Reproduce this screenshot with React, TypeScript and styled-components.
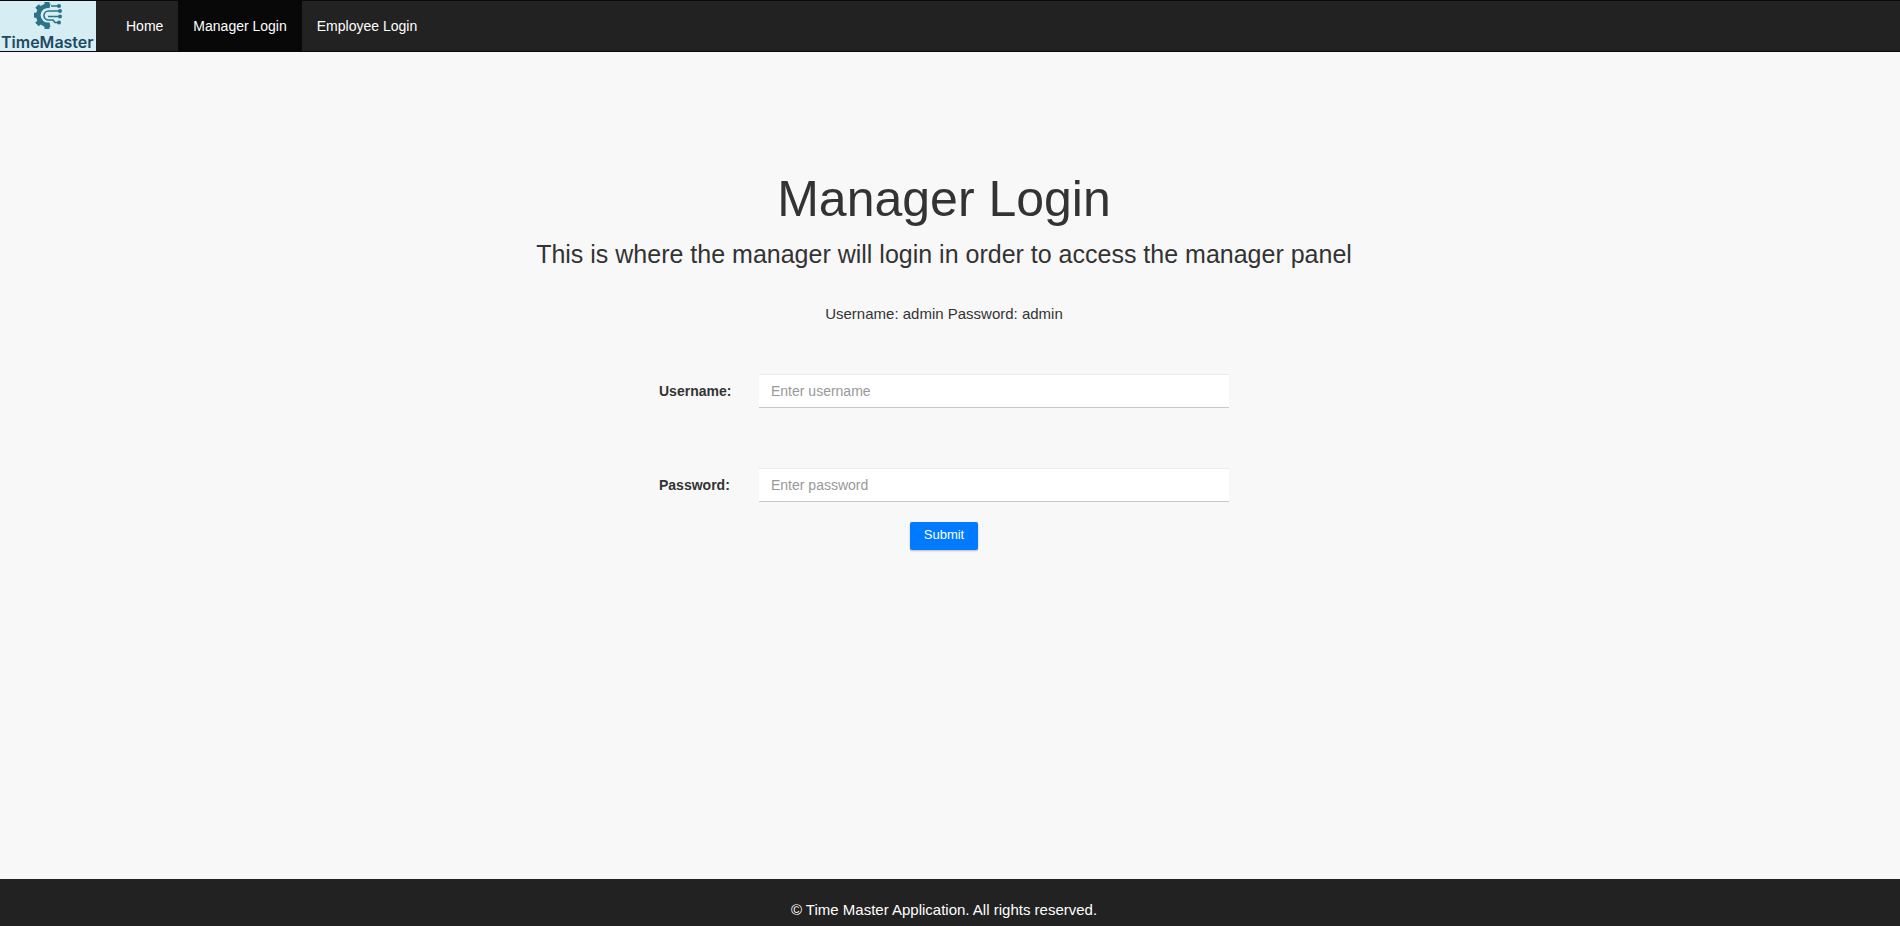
import React from "react";
import styled, { createGlobalStyle } from "styled-components";

const GlobalStyle = createGlobalStyle`
  *, *::before, *::after { box-sizing: border-box; }
  body {
    margin: 0;
    background: #f8f8f8;
    color: #333;
    font-family: "Liberation Sans", Arial, sans-serif;
    font-size: 14px;
    line-height: 20px;
  }
`;

const Page = styled.div`
  display: flex;
  flex-direction: column;
  min-height: 100vh;
`;

const Navbar = styled.nav`
  display: flex;
  background: #222;
  border: solid #080808;
  border-width: 1px 0;
`;

const Brand = styled.a`
  display: block;
  width: 96px;
  height: 50px;
  margin-right: 15px;
  background: #d7edf4;

  svg { display: block; }
`;

const NavList = styled.ul`
  display: flex;
  margin: 0;
  padding: 0;
  list-style: none;
`;

const NavLink = styled.a<{ $active?: boolean }>`
  display: block;
  padding: 15px;
  color: #fff;
  background: ${(p) => (p.$active ? "#080808" : "transparent")};
  text-decoration: none;
`;

const Main = styled.main`
  flex: 1;
  display: flex;
  flex-direction: column;
  align-items: center;
  padding: 120px 12px 40px 0;
  text-align: center;
`;

const Title = styled.h1`
  margin: 0;
  font-size: 50px;
  font-weight: 400;
  line-height: 54px;
`;

const Subtitle = styled.p`
  margin: 10px 0 0;
  font-size: 25px;
  line-height: 36px;
`;

const Hint = styled.p`
  margin: 32px 0 50px;
  font-size: 15px;
  line-height: 20px;
`;

const Form = styled.form`
  display: flex;
  flex-direction: column;
  align-items: center;
  width: 100%;
  max-width: 570px;
`;

const Field = styled.div`
  display: flex;
  align-items: center;
  width: 100%;
  margin-bottom: 60px;

  &:last-of-type { margin-bottom: 20px; }
`;

const Label = styled.label`
  flex: 0 0 100px;
  font-weight: 700;
  text-align: left;
`;

const TextInput = styled.input`
  flex: 1;
  min-width: 0;
  height: 34px;
  padding: 6px 12px;
  border: solid transparent;
  border-width: 1px 0;
  border-top-color: #ebebeb;
  border-bottom-color: #c8c8c8;
  border-radius: 0;
  background: #fff;
  color: #333;
  font: inherit;

  &::placeholder { color: #999; opacity: 1; }
`;

const SubmitButton = styled.button`
  height: 28px;
  padding: 5px 14px 7px;
  border: 0;
  border-radius: 2px;
  background: #007bff;
  box-shadow: 0 1px 2px rgba(0, 0, 0, 0.25);
  color: #fff;
  font-family: inherit;
  font-size: 13px;
  line-height: 16px;
  cursor: pointer;
`;

const Footer = styled.footer`
  padding: 20px 12px 6px 0;
  background: #222;
  color: #fff;
  font-size: 15px;
  line-height: 21px;
  text-align: center;
`;

const Logo = () => (
  <svg width="96" height="50" viewBox="0 0 96 50" role="img" aria-label="TimeMaster">
    <g fill="none" stroke="#2b7387">
      <path d="M50 5A9.500 9.500 0 1 0 50 23.500" strokeWidth="4.500" />
      <path
        d="M47 4.500V1M39.500 7.500L37 5M37 14.300H34M39.500 21L37 23.500M47 24V28"
        strokeWidth="5"
      />
      <path
        d="M58 5H51M60 10H48.500A4.500 4.500 0 0 0 48.500 19H53L55 21.500H58M60 15.500H48"
        strokeWidth="1.600"
      />
    </g>
    <g fill="#2b7387">
      <circle cx="59" cy="5" r="2" />
      <circle cx="60" cy="10" r="2" />
      <circle cx="60" cy="15.500" r="2" />
      <circle cx="59" cy="21.500" r="2" />
    </g>
    <text x="1" y="47" fill="#1d4a63" fontFamily="Inter, sans-serif" fontSize="16" fontWeight="600">
      TimeMaster
    </text>
  </svg>
);

const navItems = [
  { label: "Home" },
  { label: "Manager Login", active: true },
  { label: "Employee Login" },
];

const fields = [
  { id: "username", label: "Username:", type: "text", placeholder: "Enter username" },
  { id: "password", label: "Password:", type: "password", placeholder: "Enter password" },
];

export default function App() {
  return (
    <Page>
      <GlobalStyle />
      <Navbar>
        <Brand href="#"><Logo /></Brand>
        <NavList>
          {navItems.map((item) => (
            <li key={item.label}>
              <NavLink href="#" $active={item.active}>{item.label}</NavLink>
            </li>
          ))}
        </NavList>
      </Navbar>
      <Main>
        <Title>Manager Login</Title>
        <Subtitle>This is where the manager will login in order to access the manager panel</Subtitle>
        <Hint>Username: admin Password: admin</Hint>
        <Form onSubmit={(e) => e.preventDefault()}>
          {fields.map((f) => (
            <Field key={f.id}>
              <Label htmlFor={f.id}>{f.label}</Label>
              <TextInput id={f.id} name={f.id} type={f.type} placeholder={f.placeholder} />
            </Field>
          ))}
          <SubmitButton type="submit">Submit</SubmitButton>
        </Form>
      </Main>
      <Footer>© Time Master Application. All rights reserved.</Footer>
    </Page>
  );
}
